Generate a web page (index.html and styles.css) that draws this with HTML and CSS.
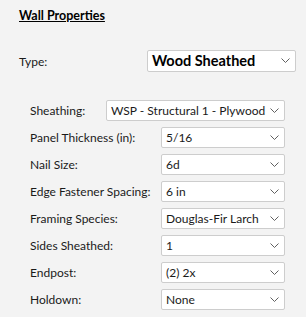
FILE: index.html
```html
<!DOCTYPE html>
<html lang="en">
<head>
  <meta charset="UTF-8">
  <title>Wall Properties</title>
  <link rel="stylesheet" href="styles.css">
</head>
<body>
  <div class="panel">
    <h2 class="title">Wall Properties</h2>

    <div class="type-row">
      <span class="lbl">Type:</span>
      <div class="combo big">Wood Sheathed
        <svg class="chev" width="9" height="5" viewBox="0 0 9 5"><polyline points="0.5,0.5 4.5,4.5 8.5,0.5"/></svg>
      </div>
    </div>

    <div class="group">
      <div class="row first">
        <span class="lbl">Sheathing:</span>
        <div class="combo wide">WSP - Structural 1 - Plywood
          <svg class="chev" width="9" height="5" viewBox="0 0 9 5"><polyline points="0.5,0.5 4.5,4.5 8.5,0.5"/></svg>
        </div>
      </div>
      <div class="row">
        <span class="lbl">Panel Thickness (in):</span>
        <div class="combo">5/16
          <svg class="chev" width="9" height="5" viewBox="0 0 9 5"><polyline points="0.5,0.5 4.5,4.5 8.5,0.5"/></svg>
        </div>
      </div>
      <div class="row">
        <span class="lbl">Nail Size:</span>
        <div class="combo">6d
          <svg class="chev" width="9" height="5" viewBox="0 0 9 5"><polyline points="0.5,0.5 4.5,4.5 8.5,0.5"/></svg>
        </div>
      </div>
      <div class="row">
        <span class="lbl">Edge Fastener Spacing:</span>
        <div class="combo">6 in
          <svg class="chev" width="9" height="5" viewBox="0 0 9 5"><polyline points="0.5,0.5 4.5,4.5 8.5,0.5"/></svg>
        </div>
      </div>
      <div class="row">
        <span class="lbl">Framing Species:</span>
        <div class="combo">Douglas-Fir Larch
          <svg class="chev" width="9" height="5" viewBox="0 0 9 5"><polyline points="0.5,0.5 4.5,4.5 8.5,0.5"/></svg>
        </div>
      </div>
      <div class="row">
        <span class="lbl">Sides Sheathed:</span>
        <div class="combo">1
          <svg class="chev" width="9" height="5" viewBox="0 0 9 5"><polyline points="0.5,0.5 4.5,4.5 8.5,0.5"/></svg>
        </div>
      </div>
      <div class="row">
        <span class="lbl">Endpost:</span>
        <div class="combo">(2) 2x
          <svg class="chev" width="9" height="5" viewBox="0 0 9 5"><polyline points="0.5,0.5 4.5,4.5 8.5,0.5"/></svg>
        </div>
      </div>
      <div class="row">
        <span class="lbl">Holdown:</span>
        <div class="combo">None
          <svg class="chev" width="9" height="5" viewBox="0 0 9 5"><polyline points="0.5,0.5 4.5,4.5 8.5,0.5"/></svg>
        </div>
      </div>
    </div>
  </div>
</body>
</html>
```

FILE: styles.css
```css
body {
  margin: 0;
  background-color: #f3f3f3;
  font-family: Lato, "Open Sans", Arial, sans-serif;
  font-size: 12px;
  color: #1a1a1a;
}

.panel {
  padding: 8px 10px 0 19px;
}

.title {
  margin: 0;
  font-size: 12.5px;
  font-weight: bold;
  text-decoration: underline;
  line-height: 16px;
  color: #000;
}

.type-row {
  display: flex;
  align-items: center;
  margin-top: 26px;
}

.type-row .lbl {
  width: 128px;
}

.group {
  margin-top: 28px;
  padding-left: 11px;
}

.row {
  display: flex;
  align-items: center;
  margin-bottom: 6px;
}

.row .lbl {
  width: 131px;
}

.row.first .lbl {
  width: 76px;
}

.combo {
  position: relative;
  box-sizing: border-box;
  height: 21px;
  width: 124px;
  padding: 0 20px 0 4px;
  line-height: 19px;
  background-color: #fff;
  border: 1px solid #cdcdcd;
  border-radius: 2px;
  white-space: nowrap;
  overflow: hidden;
}

.combo.wide {
  width: 179px;
}

.combo.big {
  width: 149px;
  height: 22px;
  line-height: 20px;
  font-size: 14.5px;
  font-weight: bold;
  color: #000;
}

/* little chevron on the right of each box */
.chev {
  position: absolute;
  right: 5px;
  top: 7px;
  fill: none;
  stroke: #606060;
  stroke-width: 1;
}
```
